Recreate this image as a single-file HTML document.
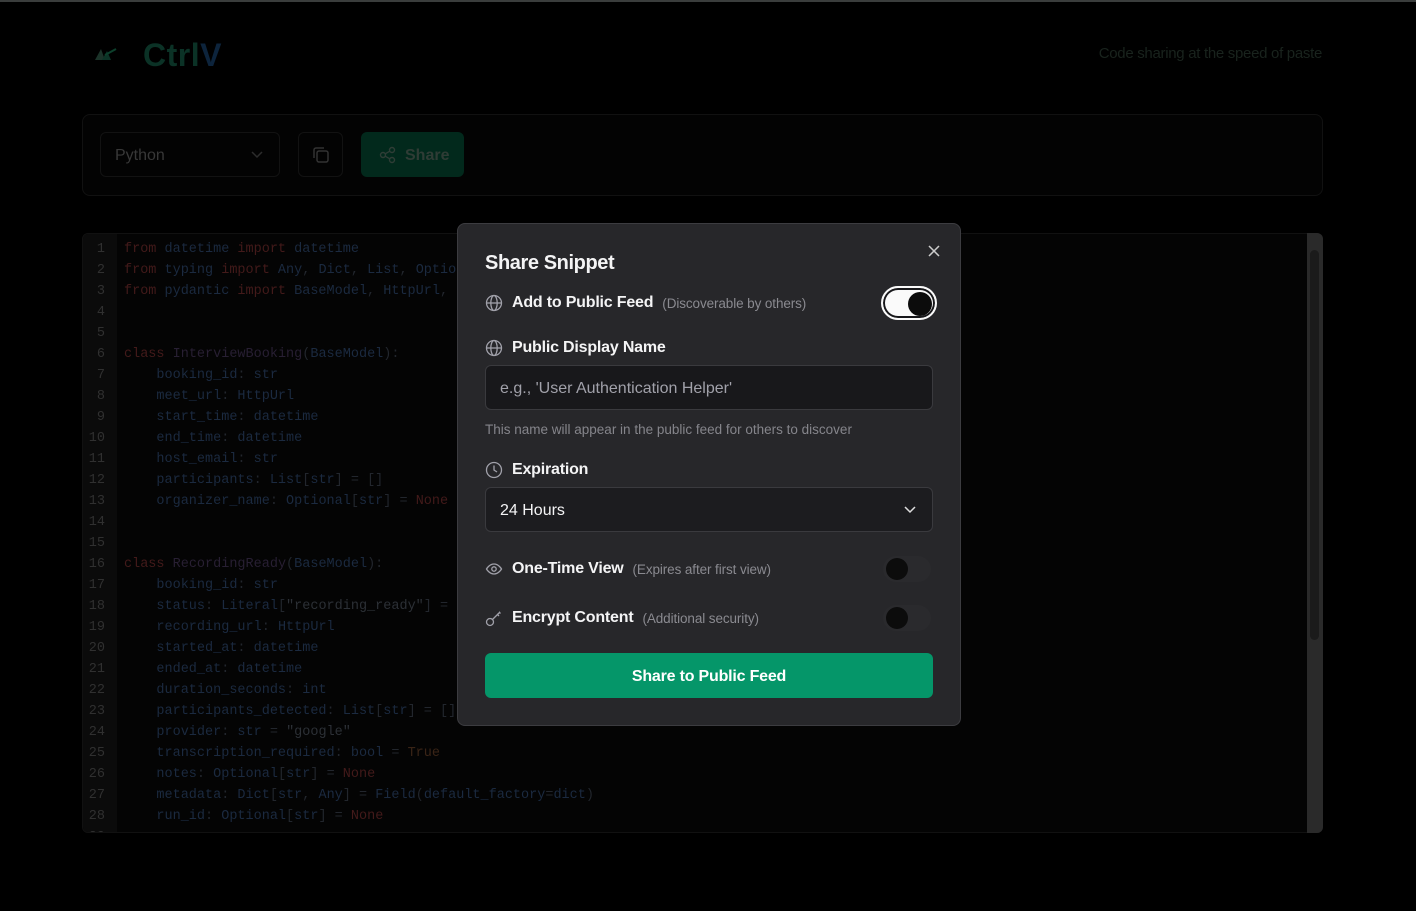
<!DOCTYPE html>
<html><head><meta charset="utf-8"><style>
*{box-sizing:border-box;margin:0;padding:0}
body{width:1416px;height:911px;background:#000;font-family:"Liberation Sans",sans-serif;position:relative;overflow:hidden}
.topline{position:absolute;left:0;top:0;width:1416px;height:2px;background:#3a3d3c}
.logo{position:absolute;left:143px;top:37px;font-size:32px;font-weight:bold;letter-spacing:0.5px}
.tag{position:absolute;right:94px;top:45px;font-size:15px;color:#19231d;letter-spacing:-0.3px}
.toolbar{position:absolute;left:82px;top:114px;width:1241px;height:82px;border:1px solid #111;border-radius:8px;background:#030303}
.sel{position:absolute;left:100px;top:132px;width:180px;height:45px;border:1px solid #121212;border-radius:6px;color:#383838;font-size:16px;padding:14px 14px}
.cp{position:absolute;left:298px;top:132px;width:45px;height:45px;border:1px solid #121212;border-radius:6px}
.sh{position:absolute;left:361px;top:132px;width:103px;height:45px;border-radius:6px;background:#02291c;color:#2f3c35;font-size:16px;font-weight:bold;padding:15px 0 0 44px}
.ed{position:absolute;left:82px;top:233px;width:1241px;height:600px;border:1px solid #111;border-radius:6px;background:#040404;overflow:hidden}
.gut{position:absolute;left:0;top:0;width:34px;height:600px;background:#0b0b0b}
pre{position:absolute;left:0;top:5px;font-family:"Liberation Mono",monospace;font-size:13.5px;line-height:21px;color:#1b2a40}
.ln{display:inline-block;width:22px;text-align:right;color:#303030;margin-right:19px}
.k{color:#431a1a}.p{color:#22262d}.s{color:#2c3036}.c{color:#281f33}.t{color:#3a2416}
.sb{position:absolute;left:1307px;top:233px;width:16px;height:600px;background:#2a2a2a;border-radius:0 6px 6px 0}
.thumb{position:absolute;left:1310px;top:250px;width:9px;height:390px;background:#1b1b1b;border-radius:5px}
.modal{position:absolute;left:457px;top:223px;width:504px;height:503px;background:#27272a;border:1px solid #3c3c40;border-radius:8px;color:#f4f4f5}
.modal .ttl{position:absolute;left:27px;top:28px;font-size:20px;font-weight:bold;letter-spacing:-0.4px}
.row{position:absolute;left:27px;font-size:16px;font-weight:bold;display:flex;align-items:center;letter-spacing:-0.2px}
.row svg{margin-right:9px}
.row .h{font-weight:normal;font-size:13.5px;color:#8a8a90;margin-left:9px;letter-spacing:-0.1px}
.inp{position:absolute;left:27px;width:448px;height:45px;background:#18181b;border:1px solid #3a3a3e;border-radius:6px;font-size:16px;padding:14px 14px}
.help{position:absolute;left:27px;top:198px;font-size:13.5px;color:#85858b}
.tog{position:absolute;left:423px;top:62px;width:56px;height:34px;border-radius:17px;background:#fafafa;border:2px solid #fafafa;box-shadow:0 0 0 2px #18181b inset}
.knob{position:absolute;border-radius:50%;background:#0c0c0c}
.btn{position:absolute;left:27px;top:429px;width:448px;height:45px;background:#059669;border-radius:6px;font-size:16px;font-weight:bold;text-align:center;line-height:47px;color:#fff;letter-spacing:-0.2px}
</style></head><body>
<div class="topline"></div>
<svg style="position:absolute;left:93px;top:45px" width="26" height="18" viewBox="0 0 26 18"><polygon points="2,15 8,4 12,15" fill="#1b3329"/><polygon points="9,15 14,6 18,15" fill="#0c3326"/><line x1="12" y1="10" x2="23" y2="4" stroke="#0d402c" stroke-width="2"/></svg>
<div class="logo"><span style="color:#0b3226">Ctrl</span><span style="color:#0d243c">V</span></div>
<div class="tag">Code sharing at the speed of paste</div>
<div class="toolbar"></div>
<div class="sel">Python<svg style="position:absolute;right:16px;top:18px" width="12" height="8" viewBox="0 0 12 8"><path d="M1 1l5 5 5-5" stroke="#2c2c2c" stroke-width="1.5" fill="none"/></svg></div>
<div class="cp"><svg style="position:absolute;left:13px;top:13px" width="18" height="18" viewBox="0 0 18 18" fill="none" stroke="#333" stroke-width="1.5"><rect x="5" y="5" width="11" height="11" rx="2"/><path d="M2 12V4a2 2 0 0 1 2-2h8"/></svg></div>
<div class="sh"><svg style="position:absolute;left:18px;top:14px" width="18" height="18" viewBox="0 0 18 18" fill="none" stroke="#2f3d36" stroke-width="1.4"><circle cx="13" cy="4" r="2.5"/><circle cx="4" cy="9" r="2.5"/><circle cx="13" cy="14" r="2.5"/><path d="M6.2 7.8l4.6-2.6M6.2 10.2l4.6 2.6"/></svg>Share</div>
<div class="ed"><div class="gut"></div>
<pre><span class="ln">1</span><span class="k">from</span> datetime <span class="k">import</span> datetime
<span class="ln">2</span><span class="k">from</span> typing <span class="k">import</span> Any<span class="p">,</span> Dict<span class="p">,</span> List<span class="p">,</span> Optional
<span class="ln">3</span><span class="k">from</span> pydantic <span class="k">import</span> BaseModel<span class="p">,</span> HttpUrl<span class="p">,</span>
<span class="ln">4</span>
<span class="ln">5</span>
<span class="ln">6</span><span class="k">class</span> <span class="c">InterviewBooking</span><span class="p">(</span>BaseModel<span class="p">):</span>
<span class="ln">7</span>    booking_id<span class="p">:</span> str
<span class="ln">8</span>    meet_url<span class="p">:</span> HttpUrl
<span class="ln">9</span>    start_time<span class="p">:</span> datetime
<span class="ln">10</span>    end_time<span class="p">:</span> datetime
<span class="ln">11</span>    host_email<span class="p">:</span> str
<span class="ln">12</span>    participants<span class="p">:</span> List<span class="p">[</span>str<span class="p">] = []</span>
<span class="ln">13</span>    organizer_name<span class="p">:</span> Optional<span class="p">[</span>str<span class="p">] =</span> <span class="k">None</span>
<span class="ln">14</span>
<span class="ln">15</span>
<span class="ln">16</span><span class="k">class</span> <span class="c">RecordingReady</span><span class="p">(</span>BaseModel<span class="p">):</span>
<span class="ln">17</span>    booking_id<span class="p">:</span> str
<span class="ln">18</span>    status<span class="p">:</span> Literal<span class="p">[</span><span class="s">"recording_ready"</span><span class="p">] =</span>
<span class="ln">19</span>    recording_url<span class="p">:</span> HttpUrl
<span class="ln">20</span>    started_at<span class="p">:</span> datetime
<span class="ln">21</span>    ended_at<span class="p">:</span> datetime
<span class="ln">22</span>    duration_seconds<span class="p">:</span> int
<span class="ln">23</span>    participants_detected<span class="p">:</span> List<span class="p">[</span>str<span class="p">] = []</span>
<span class="ln">24</span>    provider<span class="p">:</span> str <span class="p">=</span> <span class="s">"google"</span>
<span class="ln">25</span>    transcription_required<span class="p">:</span> bool <span class="p">=</span> <span class="t">True</span>
<span class="ln">26</span>    notes<span class="p">:</span> Optional<span class="p">[</span>str<span class="p">] =</span> <span class="k">None</span>
<span class="ln">27</span>    metadata<span class="p">:</span> Dict<span class="p">[</span>str<span class="p">,</span> Any<span class="p">] =</span> Field<span class="p">(</span>default_factory<span class="p">=</span>dict<span class="p">)</span>
<span class="ln">28</span>    run_id<span class="p">:</span> Optional<span class="p">[</span>str<span class="p">] =</span> <span class="k">None</span>
<span class="ln">29</span></pre></div>
<div class="sb"></div><div class="thumb"></div>

<div class="modal">
<div class="ttl">Share Snippet</div>
<svg style="position:absolute;left:470px;top:21px" width="12" height="12" viewBox="0 0 12 12" stroke="#ccc" stroke-width="1.5"><path d="M1 1l10 10M11 1L1 11"/></svg>
<div class="row" style="top:70px"><svg width="18" height="18" viewBox="0 0 18 18" fill="none" stroke="#a1a1aa" stroke-width="1.3"><circle cx="9" cy="9" r="7.5"/><ellipse cx="9" cy="9" rx="3.2" ry="7.5"/><path d="M1.5 9h15"/></svg>Add to Public Feed<span class="h">(Discoverable by others)</span></div>
<div class="tog"></div><div class="knob" style="left:450px;top:68px;width:24px;height:24px"></div>
<div class="row" style="top:115px"><svg width="18" height="18" viewBox="0 0 18 18" fill="none" stroke="#a1a1aa" stroke-width="1.3"><circle cx="9" cy="9" r="7.5"/><ellipse cx="9" cy="9" rx="3.2" ry="7.5"/><path d="M1.5 9h15"/></svg>Public Display Name</div>
<div class="inp" style="top:141px;color:#a1a1aa">e.g., 'User Authentication Helper'</div>
<div class="help">This name will appear in the public feed for others to discover</div>
<div class="row" style="top:237px"><svg width="18" height="18" viewBox="0 0 18 18" fill="none" stroke="#a1a1aa" stroke-width="1.3"><circle cx="9" cy="9" r="7.5"/><path d="M9 4.5V9l3 2"/></svg>Expiration</div>
<div class="inp" style="top:263px;background:#1c1c1f;color:#f4f4f5">24 Hours<svg style="position:absolute;right:16px;top:18px" width="12" height="8" viewBox="0 0 12 8"><path d="M1 1l5 5 5-5" stroke="#ddd" stroke-width="1.5" fill="none"/></svg></div>
<div class="row" style="top:336px"><svg width="18" height="18" viewBox="0 0 18 18" fill="none" stroke="#a1a1aa" stroke-width="1.3"><path d="M1.5 9s2.8-5 7.5-5 7.5 5 7.5 5-2.8 5-7.5 5-7.5-5-7.5-5z"/><circle cx="9" cy="9" r="2.2"/></svg>One-Time View<span class="h">(Expires after first view)</span></div>
<div style="position:absolute;left:425px;top:332px;width:48px;height:26px;border-radius:13px;background:#2a2a2d"></div><div class="knob" style="left:428px;top:334px;width:22px;height:22px"></div>
<div class="row" style="top:385px"><svg width="18" height="18" viewBox="0 0 18 18" fill="none" stroke="#a1a1aa" stroke-width="1.3"><circle cx="5" cy="13" r="3.5"/><path d="M7.5 10.5L15 3M12 5l2 2M14 3l1.5 1.5"/></svg>Encrypt Content<span class="h">(Additional security)</span></div>
<div style="position:absolute;left:425px;top:381px;width:48px;height:26px;border-radius:13px;background:#2a2a2d"></div><div class="knob" style="left:428px;top:383px;width:22px;height:22px"></div>
<div class="btn">Share to Public Feed</div>
</div>
</body></html>
